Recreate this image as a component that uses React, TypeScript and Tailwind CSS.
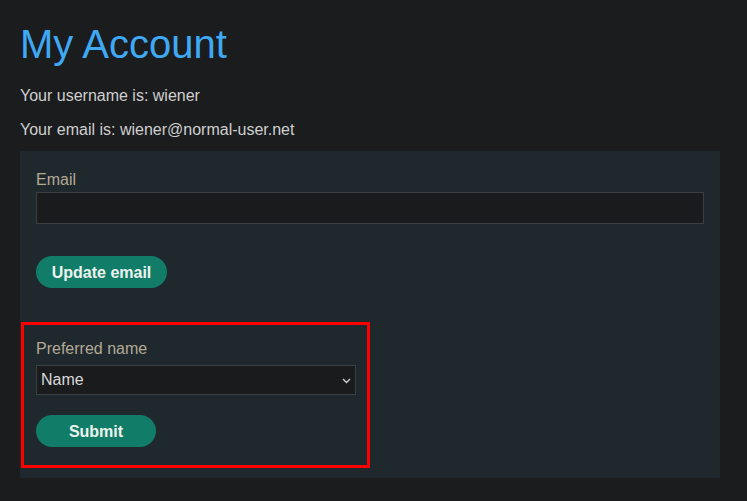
export default function App() {
  return (
    <div className="min-h-[501px] bg-[#1b1c1e] px-5 pb-6 font-['Liberation_Sans',Arial,sans-serif] text-[#cfcfcf]">
      <h1 className="pt-[21px] text-[40px] leading-[46px] text-[#3fa9f5]">My Account</h1>
      <p className="mt-[20px] text-base leading-[18px]">Your username is: wiener</p>
      <p className="mt-4 text-base leading-[18px]">Your email is: wiener@normal-user.net</p>

      <div className="mt-[12px] w-[700px] bg-[#1f282d] px-4 pt-[20px] pb-[31px]">
        <form onSubmit={(e) => e.preventDefault()} className="flex flex-col">
          <label className="text-base leading-[18px] text-[#b3a995]">Email</label>
          <input
            type="email"
            className="mt-[3px] h-8 w-full border border-[#3a3f41] bg-[#1a1b1d] px-1 text-[#d8d8d8] outline-none"
          />
          <button className="mt-8 h-8 w-[131px] rounded-full bg-[#117d68] pt-0.5 text-base font-bold text-[#eef2ee]">
            Update email
          </button>
        </form>

        <div className="relative mt-[52px]">
          {/* highlight box drawn over the form */}
          <div className="pointer-events-none absolute left-[-15px] top-[-18px] h-[146px] w-[349px] border-[3px] border-[#ff0000]" />
          <form onSubmit={(e) => e.preventDefault()} className="flex flex-col">
            <label className="text-base leading-[18px] text-[#b3a995]">Preferred name</label>
            <div className="relative mt-[7px] w-[320px]">
              <select className="h-[30px] w-full appearance-none border border-[#3a3f41] bg-[#1a1b1d] pl-1 text-base text-[#d8d8d8] outline-none">
                <option>Name</option>
              </select>
              <svg
                className="pointer-events-none absolute right-[5px] top-[13px]"
                width="9"
                height="6"
                viewBox="0 0 9 6"
                fill="none"
              >
                <path d="M1 1l3.5 3.5L8 1" stroke="#cfcfcf" strokeWidth="1.4" />
              </svg>
            </div>
            <button className="mt-5 h-8 w-[120px] rounded-full bg-[#117d68] pt-0.5 text-base font-bold text-[#eef2ee]">
              Submit
            </button>
          </form>
        </div>
      </div>
    </div>
  );
}
